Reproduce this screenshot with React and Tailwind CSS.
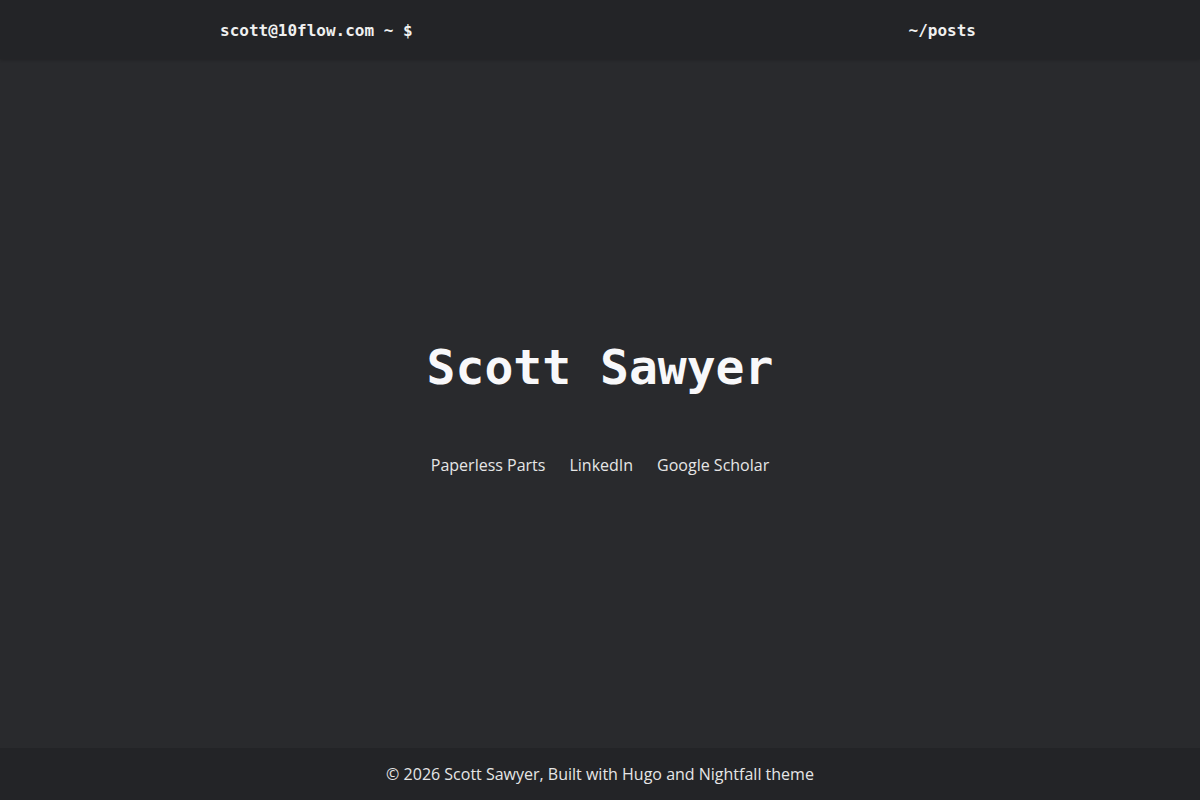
export default function App() {
  return (
    <div className="flex h-[800px] w-full flex-col bg-[#292a2d] text-[#eeeeee]">
      <header className="h-[59px] shrink-0 bg-[#232427] font-['DejaVu_Sans_Mono','Liberation_Mono',monospace] shadow-[0_1px_3px_rgba(0,0,0,0.2)]">
        <div className="mx-auto flex h-full w-[760px] items-center justify-between pt-[2px] pr-[4px] text-[16px] font-bold leading-6 text-[#f0f0f0]">
          <span>scott@10flow.com ~ $</span>
          <span>~/posts</span>
        </div>
      </header>
      <main className="flex flex-1 flex-col items-center justify-center pt-[8px]">
        <h1 className="font-['DejaVu_Sans_Mono','Liberation_Mono',monospace] text-[48px] font-bold leading-[58px] text-[#f8f8fa]">Scott Sawyer</h1>
        <nav className="mt-[57px] flex gap-6 font-['Open_Sans','Noto_Sans',sans-serif] text-[16px] leading-6 text-[#e6e6e6]">
          <a>Paperless Parts</a>
          <a>LinkedIn</a>
          <a>Google Scholar</a>
        </nav>
      </main>
      <footer className="flex h-[52px] shrink-0 items-center justify-center bg-[#232427] font-['Open_Sans','Noto_Sans',sans-serif] text-[16px] leading-6 text-[#e6e6e6]">
        © 2026 Scott Sawyer, Built with Hugo and Nightfall theme
      </footer>
    </div>
  );
}
